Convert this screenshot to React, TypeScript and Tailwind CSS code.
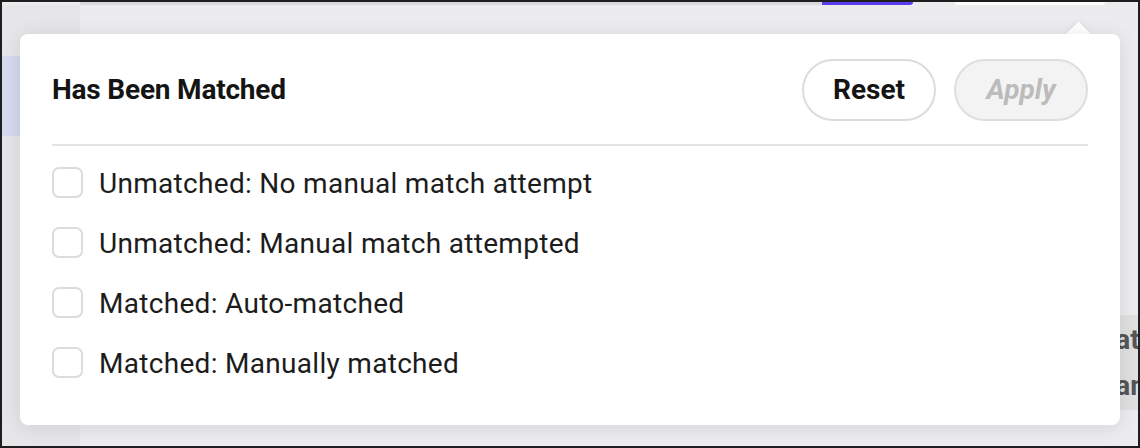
import { useState } from "react";

const options = [
  { id: "unmatched-none", label: "Unmatched: No manual match attempt" },
  { id: "unmatched-attempted", label: "Unmatched: Manual match attempted" },
  { id: "matched-auto", label: "Matched: Auto-matched" },
  { id: "matched-manual", label: "Matched: Manually matched" },
];

export default function App() {
  const [checked, setChecked] = useState<string[]>([]);

  const toggle = (id: string) =>
    setChecked((prev) =>
      prev.includes(id) ? prev.filter((x) => x !== id) : [...prev, id]
    );

  return (
    <div className="relative w-[1140px] h-[448px] overflow-hidden border-2 border-[#1e1e1e] bg-[#ececef] font-['Roboto',sans-serif]">
      {/* page behind the popover */}
      <div className="flex flex-col h-full">
        <div className="flex h-[3px]">
          <div className="w-[78px]" />
          <div className="w-[742px] bg-[#d9d9dc]" />
          <div className="w-[91px] bg-[#5b3cf0] rounded-br-[3px]" />
          <div className="w-[42px]" />
          <div className="w-[150px] bg-white rounded-b-full" />
        </div>
        <div className="flex flex-1">
          <aside className="w-[78px] bg-[#e6e6e9] pt-[51px]">
            <div className="h-[80px] bg-[#d6d9ef]" />
          </aside>
          <main className="flex-1 flex flex-col pt-[310px]">
            <div className="h-[95px] bg-[#e0e0e0] flex justify-end overflow-hidden">
              <div className="flex flex-col justify-center gap-[20px] mr-[-8px] text-[28px] leading-[26px] font-bold text-[#555]">
                <span>at</span>
                <span>an</span>
              </div>
            </div>
          </main>
        </div>
      </div>

      {/* popover */}
      <div className="absolute left-[18px] top-[32px] w-[1100px] h-[391px]">
        <div className="absolute left-[1050px] -top-[9px] w-[17px] h-[17px] rotate-45 bg-white shadow-[0_0_6px_rgba(0,0,0,0.08)]" />
        <div className="relative h-full bg-white rounded-[8px] shadow-[0_2px_20px_rgba(0,0,0,0.10)] px-8 pt-[25px]">
          <div className="flex items-center justify-between h-[62px]">
            <h2 className="text-[28px] font-bold text-[#141414] tracking-[-0.2px]">Has Been Matched</h2>
            <div className="flex gap-[18px]">
              <button
                onClick={() => setChecked([])}
                className="w-[134px] h-[62px] rounded-full border-2 border-[#dcdcdc] bg-white text-[28px] font-bold text-[#141414]"
              >
                Reset
              </button>
              <button
                disabled={checked.length === 0}
                className="w-[134px] h-[62px] rounded-full border-2 border-[#dedede] bg-[#f3f3f3] text-[28px] font-bold italic text-[#bbbbbb]"
              >
                Apply
              </button>
            </div>
          </div>
          <div className="mt-[23px] h-[2px] bg-[#e4e4e4]" />
          <div className="flex flex-col pt-[6px]">
            {options.map((option) => (
              <label key={option.id} className="flex items-center gap-4 h-[60px] cursor-pointer">
                <input
                  type="checkbox"
                  checked={checked.includes(option.id)}
                  onChange={() => toggle(option.id)}
                  className="appearance-none w-[31px] h-[31px] rounded-[7px] border-2 border-[#dcdcdc] bg-white checked:bg-[#5b3cf0] checked:border-[#5b3cf0]"
                />
                <span className="pt-[3px] text-[28px] tracking-[0.3px] text-[#1c1c1c]">{option.label}</span>
              </label>
            ))}
          </div>
        </div>
      </div>
    </div>
  );
}
